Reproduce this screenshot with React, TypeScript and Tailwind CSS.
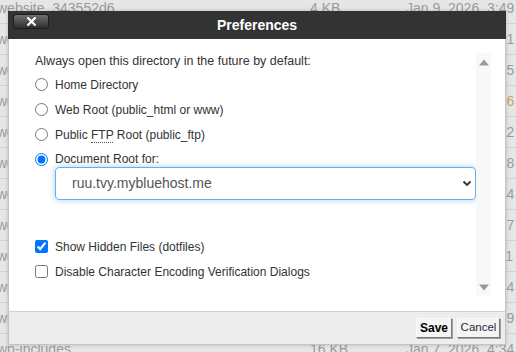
import React from "react";

const rows = [
  { name: "website_343552d6", size: "4 KB", date: "Jan 9, 2026, 3:49 PM" },
  { name: "website_2f8a91c0", size: "4 KB", date: "Jan 9, 2026, 3:21 PM" },
  { name: "website_7c1d3e44", size: "4 KB", date: "Jan 9, 2026, 3:25 PM" },
  { name: "website_91ab0c2f", size: "4 KB", date: "Jan 9, 2026, 3:16 PM" },
  { name: "website_5e6f7a8b", size: "4 KB", date: "Jan 9, 2026, 3:22 PM" },
  { name: "website_0d9c8b7a", size: "4 KB", date: "Jan 9, 2026, 3:28 PM" },
  { name: "website_3a4b5c6d", size: "4 KB", date: "Jan 8, 2026, 2:44 PM" },
  { name: "website_8e9f0a1b", size: "4 KB", date: "Jan 8, 2026, 2:27 PM" },
  { name: "website_6c7d8e9f", size: "4 KB", date: "Jan 8, 2026, 2:11 PM" },
  { name: "wp-content", size: "4 KB", date: "Jan 7, 2026, 4:34 PM" },
  { name: "wp-admin", size: "4 KB", date: "Jan 7, 2026, 4:59 PM" },
  { name: "wp-includes", size: "16 KB", date: "Jan 7, 2026, 4:34 PM" },
];

function Radio({ label, checked }: { label: React.ReactNode; checked?: boolean }) {
  return (
    <label className="flex h-[25px] items-center gap-[7px]">
      <input
        type="radio"
        name="dir"
        defaultChecked={checked}
        className="m-0 h-[13px] w-[13px] shrink-0 accent-[#0075ff]"
      />
      <span className="text-[12px] leading-[14px] text-[#333]">{label}</span>
    </label>
  );
}

function Check({ label, checked }: { label: string; checked?: boolean }) {
  return (
    <label className="flex h-[25px] items-center gap-[7px]">
      <input
        type="checkbox"
        defaultChecked={checked}
        className="m-0 h-[13px] w-[13px] shrink-0 accent-[#0075ff]"
      />
      <span className="text-[12px] leading-[14px] text-[#333]">{label}</span>
    </label>
  );
}

export default function App() {
  return (
    <div className="relative h-[352px] w-[516px] overflow-hidden bg-[#e6e6e6] font-['Liberation_Sans',Arial,sans-serif]">
      {/* background file table */}
      <div className="-ml-[3px] -mt-[7px] flex flex-col">
        {rows.map((r, i) => (
          <div
            key={i}
            className="flex h-[31px] shrink-0 items-center whitespace-nowrap border-b border-[#d3d3d3] text-[14px] text-[#9c9c9c]"
          >
            <span className="w-[313px] shrink-0">{r.name}</span>
            <span className="w-[96px] shrink-0">{r.size}</span>
            <span className={i === 3 ? "text-[#c9a070]" : ""}>{r.date}</span>
          </div>
        ))}
      </div>

      {/* dialog */}
      <div className="absolute left-[8px] top-[11px] flex h-[334px] w-[498px] flex-col shadow-[0_0_4px_rgba(0,0,0,0.2)]">
        <div className="grid h-[28px] shrink-0 grid-cols-[1fr_auto_1fr] bg-[#333333]">
          <div className="flex items-start pl-[5px] pt-[3px]">
            <button className="flex h-[15px] w-[36px] items-center justify-center rounded-[3px] border border-[#1c1c1c] bg-gradient-to-b from-[#707070] to-[#2f2f2f]">
              <svg width="9" height="9" viewBox="0 0 9 9">
                <path d="M1.2 1.2 L7.8 7.8 M7.8 1.2 L1.2 7.8" stroke="#ffffff" strokeWidth="2.2" strokeLinecap="square" />
              </svg>
            </button>
          </div>
          <div className="flex items-center text-[14px] font-bold text-white">Preferences</div>
          <div />
        </div>

        <div className="flex-1 border-x border-[#c4c4c4] bg-white pl-[26px] pr-[14px] pt-[14px]">
          <div className="flex h-[242px]">
            <div className="flex flex-1 flex-col">
              <div className="h-[19px] text-[12.5px] leading-[16px] text-[#333]">
                Always open this directory in the future by default:
              </div>
              <Radio label="Home Directory" />
              <Radio label="Web Root (public_html or www)" />
              <Radio
                label={
                  <>
                    Public{" "}
                    <abbr className="no-underline border-b border-dotted border-[#555]">FTP</abbr>{" "}
                    Root (public_ftp)
                  </>
                }
              />
              <label className="flex h-[20px] items-start gap-[7px] pt-[6px]">
                <input
                  type="radio"
                  name="dir"
                  defaultChecked
                  className="m-0 h-[13px] w-[13px] shrink-0 accent-[#0075ff]"
                />
                <span className="text-[12px] leading-[13px] text-[#333]">Document Root for:</span>
              </label>
              <div className="ml-[20px] flex h-[33px] items-center rounded-[4px] border border-[#66afe9] pl-[16px] pr-[3px] text-[14px] text-[#555] shadow-[0_0_6px_rgba(102,175,233,0.6)]">
                <span className="flex-1">ruu.tvy.mybluehost.me</span>
                <svg width="10" height="7" viewBox="0 0 10 7">
                  <path d="M1.5 1.5 L5 5 L8.5 1.5" fill="none" stroke="#333" strokeWidth="1.8" />
                </svg>
              </div>
              <div className="mt-[34px] flex flex-col">
                <Check label="Show Hidden Files (dotfiles)" checked />
                <Check label="Disable Character Encoding Verification Dialogs" />
              </div>
            </div>
            <div className="flex w-[15px] shrink-0 flex-col items-center justify-between bg-[#f8f8f8] pb-[4px] pt-[6px]">
              <svg width="10" height="7" viewBox="0 0 10 7">
                <path d="M0 6.5 L5 0.5 L10 6.5 Z" fill="#999999" />
              </svg>
              <svg width="10" height="7" viewBox="0 0 10 7">
                <path d="M0 0.5 L5 6.5 L10 0.5 Z" fill="#999999" />
              </svg>
            </div>
          </div>
        </div>

        <div className="flex h-[34px] shrink-0 items-center justify-end gap-[5px] border border-[#c4c4c4] border-t-[#d2d2d2] bg-[#ededed] pr-[5px]">
          <button className="flex h-[20px] w-[36px] items-center justify-center border border-b-[#777] border-l-[#fafafa] border-r-[#777] border-t-[#fafafa] bg-[#f4f4f4] text-[12px] font-bold text-black shadow-[1px_1px_0_#a0a0a0]">
            Save
          </button>
          <button className="flex h-[20px] w-[43px] items-center justify-center border border-b-[#777] border-l-[#fafafa] border-r-[#777] border-t-[#fafafa] bg-[#f4f4f4] text-[11.5px] text-[#2a2a3a] shadow-[1px_1px_0_#a0a0a0]">
            Cancel
          </button>
        </div>
      </div>
    </div>
  );
}
